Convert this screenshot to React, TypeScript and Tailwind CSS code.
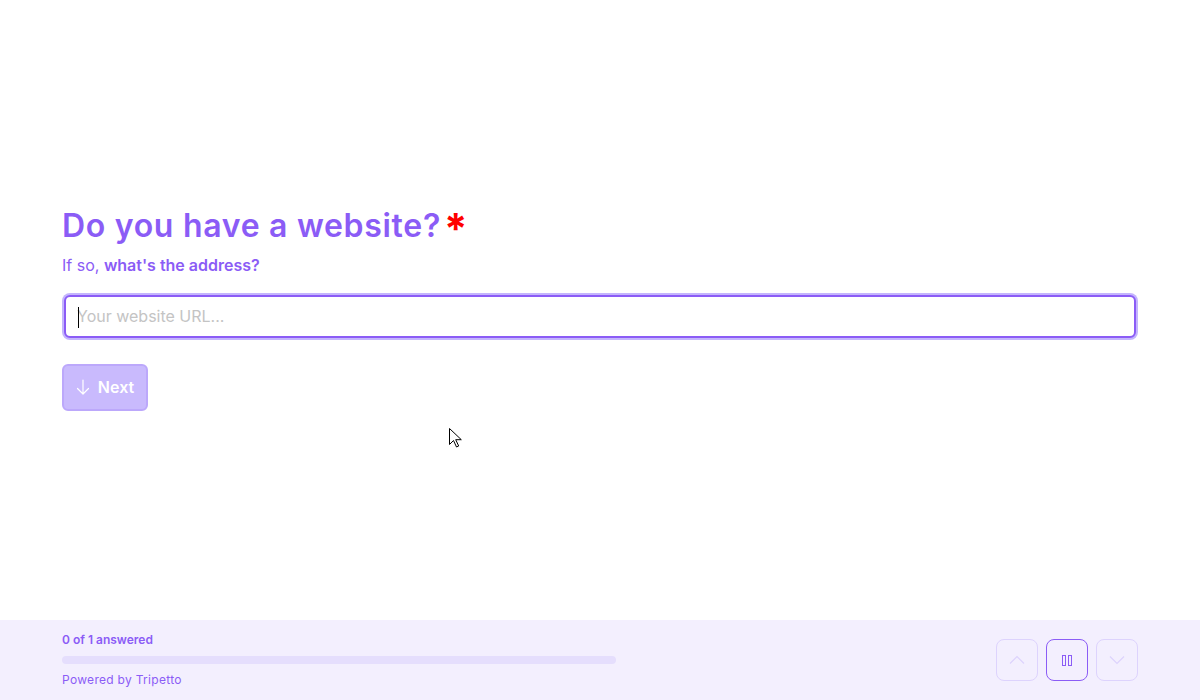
import React from "react";

const font = { fontFamily: "Inter, 'Noto Sans', sans-serif" };

export default function App() {
  return (
    <div className="relative w-[1200px] h-[700px] bg-white flex flex-col overflow-hidden" style={font}>
      <div className="flex-1 flex flex-col justify-center px-[62px] pb-[4px]">
        <div className="flex items-start">
          <h1 className="text-[32px] leading-[40px] font-semibold text-[#8b5cf6] tracking-[0.7px]">Do you have a website?</h1>
          <span className="text-[#ff0000] text-[42px] leading-[40px] font-bold ml-[3px] mt-[3px]">*</span>
        </div>
        <p className="mt-[4px] text-[16px] leading-[24px] text-[#8b5cf6]">
          If so, <span className="font-semibold">what's the address?</span>
        </p>
        <div className="mt-[16px] rounded-[8px] p-[2px] bg-[#c4b5fd]">
          <div className="relative rounded-[6px] border-2 border-[#8b5cf6] bg-white h-[43px] flex items-center px-[11px]">
            <span className="absolute left-[12px] top-[10px] w-px h-[21px] bg-black" />
            <input
              className="w-full outline-none text-[16px] text-gray-700 placeholder:text-[#c4c4c4] bg-transparent"
              placeholder="Your website URL..."
              style={font}
            />
          </div>
        </div>
        <div className="mt-[24px]">
          <button className="h-[47px] w-[86px] rounded-[6px] bg-[#c9bafd] border-2 border-[#bca8fb] flex items-center justify-center gap-[8px] text-white text-[16px] font-semibold">
            <svg width="14" height="16" viewBox="0 0 14 16" fill="none" stroke="white" strokeWidth="1.2" strokeLinecap="round" strokeLinejoin="round">
              <path d="M7 1v14M1.5 9.5L7 15l5.5-5.5" />
            </svg>
            <span>Next</span>
          </button>
        </div>
      </div>
      <div className="h-[80px] bg-[#f3effe] flex items-center justify-between px-[62px]">
        <div className="w-[554px] flex flex-col">
          <span className="text-[12px] leading-[16px] font-semibold text-[#8b5cf6]">0 of 1 answered</span>
          <div className="mt-[8px] h-[8px] rounded-full bg-[#e5defd]" />
          <span className="mt-[8px] text-[12px] leading-[16px] text-[#8b5cf6] tracking-[0.3px]">Powered by Tripetto</span>
        </div>
        <div className="flex gap-[8px]">
          <div className="w-[42px] h-[42px] rounded-[8px] border border-[#ddd3fd] flex items-center justify-center">
            <svg width="16" height="10" viewBox="0 0 16 10" fill="none" stroke="#ddd3fd" strokeWidth="1.2">
              <path d="M1 8.5L8 1.5l7 7" />
            </svg>
          </div>
          <div className="w-[42px] h-[42px] rounded-[8px] border border-[#8b5cf6] flex items-center justify-center gap-[2px]">
            <span className="w-[4px] h-[11px] border border-[#8b5cf6]" />
            <span className="w-[4px] h-[11px] border border-[#8b5cf6]" />
          </div>
          <div className="w-[42px] h-[42px] rounded-[8px] border border-[#ddd3fd] flex items-center justify-center">
            <svg width="16" height="10" viewBox="0 0 16 10" fill="none" stroke="#ddd3fd" strokeWidth="1.2">
              <path d="M1 1.5l7 7 7-7" />
            </svg>
          </div>
        </div>
      </div>
      <svg className="absolute left-[449px] top-[428px]" width="14" height="20" viewBox="0 0 14 20">
        <path d="M0.5 0.5v16l4-4 3 6.5 2.2-1-3-6.3h5.6z" fill="white" stroke="black" strokeWidth="1" />
      </svg>
    </div>
  );
}
